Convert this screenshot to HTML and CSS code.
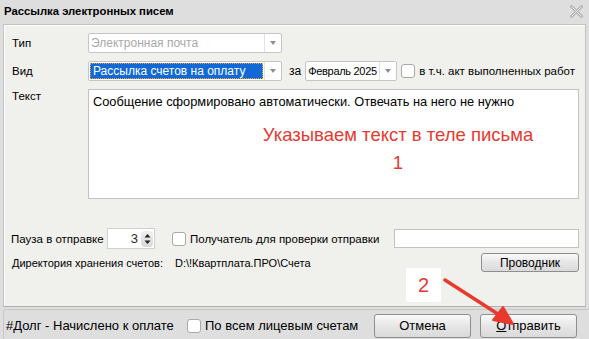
FILE: index.html
```html
<!DOCTYPE html>
<html lang="ru">
<head>
    <meta charset="UTF-8">
    <title>Рассылка электронных писем</title>
    <link rel="stylesheet" href="styles.css">
</head>
<body>
    <div class="window">
        <div class="titlebar">
            <span class="title">Рассылка электронных писем</span>
            <svg class="close" width="13" height="13" viewBox="0 0 13 13">
                <path d="M1.5 1.5 L11.5 11.5 M11.5 1.5 L1.5 11.5" stroke="#b4b4b4" stroke-width="3" stroke-linecap="round"/>
                <path d="M1.5 1.5 L11.5 11.5 M11.5 1.5 L1.5 11.5" stroke="#e6e6e6" stroke-width="1"/>
            </svg>
        </div>

        <div class="panel">
            <div class="row">
                <span class="label">Тип</span>
                <div class="combo combo-main disabled">
                    <span class="value">Электронная почта</span>
                    <span class="drop"></span>
                </div>
            </div>

            <div class="row">
                <span class="label">Вид</span>
                <div class="combo combo-main">
                    <span class="value selected">Рассылка счетов на оплату</span>
                    <span class="drop"></span>
                </div>
                <span class="za">за</span>
                <div class="combo combo-month">
                    <span class="value">Февраль 2025</span>
                    <span class="drop"></span>
                </div>
                <span class="check"></span>
                <span class="text">в т.ч. акт выполненных работ</span>
            </div>

            <div class="row row-top">
                <span class="label label-top">Текст</span>
                <div class="textarea">Сообщение сформировано автоматически. Отвечать на него не нужно</div>
            </div>

            <div class="row row-pause">
                <span class="label label-pause">Пауза в отправке</span>
                <div class="spin">
                    <span class="spin-value">3</span>
                    <span class="spin-btn">
                        <svg width="9" height="14" viewBox="0 0 9 14">
                            <path d="M4.5 2 L7.5 5.5 L1.5 5.5 Z M4.5 12 L7.5 8.5 L1.5 8.5 Z" fill="#222"/>
                        </svg>
                    </span>
                </div>
                <span class="check check-recv"></span>
                <span class="text text-recv">Получатель для проверки отправки</span>
                <div class="input"></div>
            </div>

            <div class="row row-dir">
                <span class="label label-dir">Директория хранения счетов:</span>
                <span class="path">D:\!Квартплата.ПРО\Счета</span>
                <button class="btn btn-explorer">Проводник</button>
            </div>
        </div>

        <div class="footer">
            <span class="debt">#Долг - Начислено к оплате</span>
            <span class="check check-all"></span>
            <span class="all">По всем лицевым счетам</span>
            <button class="btn btn-cancel">Отмена</button>
            <button class="btn btn-send"><u>О</u>тправить</button>
        </div>

        <div class="note note-1">
            <div>Указываем текст в теле письма</div>
            <div>1</div>
        </div>
        <div class="note-2">2</div>
        <svg class="arrow" width="100" height="60" viewBox="0 0 100 60">
            <path d="M2 2 L58 38" stroke="#e8392c" stroke-width="3.5" stroke-linecap="round"/>
            <path d="M70 46 L50 42 L60 29 Z" fill="#e8392c" stroke="#e8392c" stroke-width="2" stroke-linejoin="round"/>
        </svg>
    </div>
</body>
</html>
```

FILE: styles.css
```css
body {
    margin: 0;
    background-color: #dedede;
    font-family: 'Liberation Sans', Arial, sans-serif;
    font-size: 11px;
    color: #000;
}
.window {
    position: relative;
    width: 589px;
    height: 339px;
    overflow: hidden;
}
.titlebar {
    height: 24px;
    display: flex;
    align-items: center;
    justify-content: space-between;
    padding: 0 6px 0 4px;
}
.title {
    font-weight: bold;
    font-size: 11.3px;
    margin-top: -2px;
}
.close {
    margin-top: -2px;
}
.panel {
    margin: 0 3px;
    height: 273px;
    padding-top: 8px;
    background-color: #f0f0ec;
    border: 1px solid #c2c2c2;
    border-bottom-color: #b0b0b0;
    box-shadow: inset 1px 1px 0 #fff;
}
.row {
    display: flex;
    align-items: center;
    margin-bottom: 8px;
    white-space: nowrap;
}
.row-top {
    align-items: flex-start;
}
.label {
    width: 76px;
    padding-left: 8px;
    flex-shrink: 0;
    font-size: 11.5px;
}
.label-top {
    padding-top: 1px;
}
.combo {
    height: 18px;
    display: flex;
    flex-shrink: 0;
    background: #fff;
    border: 1px solid #c6c6c6;
    border-radius: 2px;
}
.combo-main {
    width: 192px;
}
.combo-month {
    width: 90px;
}
.combo .value {
    flex: 1;
    padding: 0 2px;
    line-height: 18px;
    white-space: nowrap;
    overflow: hidden;
}
.combo .value.selected {
    margin: 1px;
    padding: 0 2px;
    line-height: 14px;
    font-size: 12px;
    background: #1269d6;
    color: #fff;
    border: 1px dotted #f2a530;
}
.combo-month .value {
    font-size: 11px;
    letter-spacing: -0.3px;
    padding: 0 0 0 2px;
}
.disabled .value {
    color: #a8a8a8;
    font-size: 12px;
}
.drop {
    width: 16px;
    flex-shrink: 0;
    border-left: 1px solid #e2e2e2;
    position: relative;
}
.drop::after {
    content: "";
    position: absolute;
    left: 5px;
    top: 7px;
    border-left: 3.5px solid transparent;
    border-right: 3.5px solid transparent;
    border-top: 4px solid #8e8e8e;
}
.za {
    margin: 0 4px 0 7px;
    font-size: 12px;
}
.check {
    width: 12px;
    height: 12px;
    background: #fff;
    border: 1px solid #a9a9a9;
    border-radius: 3px;
    margin: 0 4px 0 4px;
    flex-shrink: 0;
}
.text {
    font-size: 11.5px;
}
.textarea {
    width: 485px;
    height: 104px;
    background: #fff;
    border: 1px solid #c2c2c2;
    padding: 4px 0 0 4px;
    font-size: 12.8px;
}
.row-pause {
    margin-top: 29px;
    margin-bottom: 4px;
}
.label-pause {
    width: 96px;
    padding-left: 7px;
}
.spin {
    width: 46px;
    height: 19px;
    flex-shrink: 0;
    background: #fff;
    border: 1px solid #d0d0d0;
    display: flex;
    align-items: center;
    justify-content: flex-end;
}
.spin-value {
    font-size: 13px;
    color: #2a2a2a;
    margin-right: 3px;
}
.spin-btn {
    width: 12px;
    height: 16px;
    margin-right: 1px;
    background: linear-gradient(#f0f0f0, #d8d8d8);
    border-radius: 4px;
    display: flex;
    align-items: center;
    justify-content: center;
}
.check-recv {
    margin-left: 17px;
}
.text-recv {
    width: 204px;
    flex-shrink: 0;
}
.input {
    width: 183px;
    height: 17px;
    flex-shrink: 0;
    background: #fff;
    border: 1px solid #c2c2c2;
}
.label-dir {
    width: 163px;
    font-size: 11px;
}
.path {
    flex: 1;
}
.btn {
    font-family: 'Liberation Sans', Arial, sans-serif;
    font-size: 12px;
    color: #000;
    background: linear-gradient(#fafafa, #e6e6e6 50%, #dadada);
    border: 1px solid #8e8e8e;
    border-radius: 3px;
    padding: 0;
}
.btn-explorer {
    width: 98px;
    height: 19px;
    margin-right: 6px;
}
.footer {
    margin: 2px 0 0 3px;
    height: 31px;
    border-top: 1px solid #c8c8c8;
    border-left: 1px solid #c8c8c8;
    border-top-left-radius: 3px;
    display: flex;
    align-items: center;
    padding-left: 2px;
    white-space: nowrap;
}
.debt {
    font-size: 13px;
    width: 178px;
}
.check-all {
    margin-left: 3px;
}
.all {
    font-size: 13px;
    width: 169px;
}
.btn-send, .btn-cancel {
    width: 97px;
    height: 24px;
    font-size: 13px;
}
.btn-cancel {
    margin-right: 9px;
}
.note {
    position: absolute;
    left: 262px;
    top: 124px;
    width: 272px;
    text-align: center;
    color: #e53a30;
    font-size: 18.5px;
    line-height: 22px;
}
.note div + div {
    margin-top: 6px;
}
.note-2 {
    position: absolute;
    left: 406px;
    top: 268px;
    width: 35px;
    height: 34px;
    background: #fff;
    border-radius: 2px;
    color: #e53a30;
    font-size: 20px;
    line-height: 34px;
    text-align: center;
}
.arrow {
    position: absolute;
    left: 443px;
    top: 278px;
}
```
